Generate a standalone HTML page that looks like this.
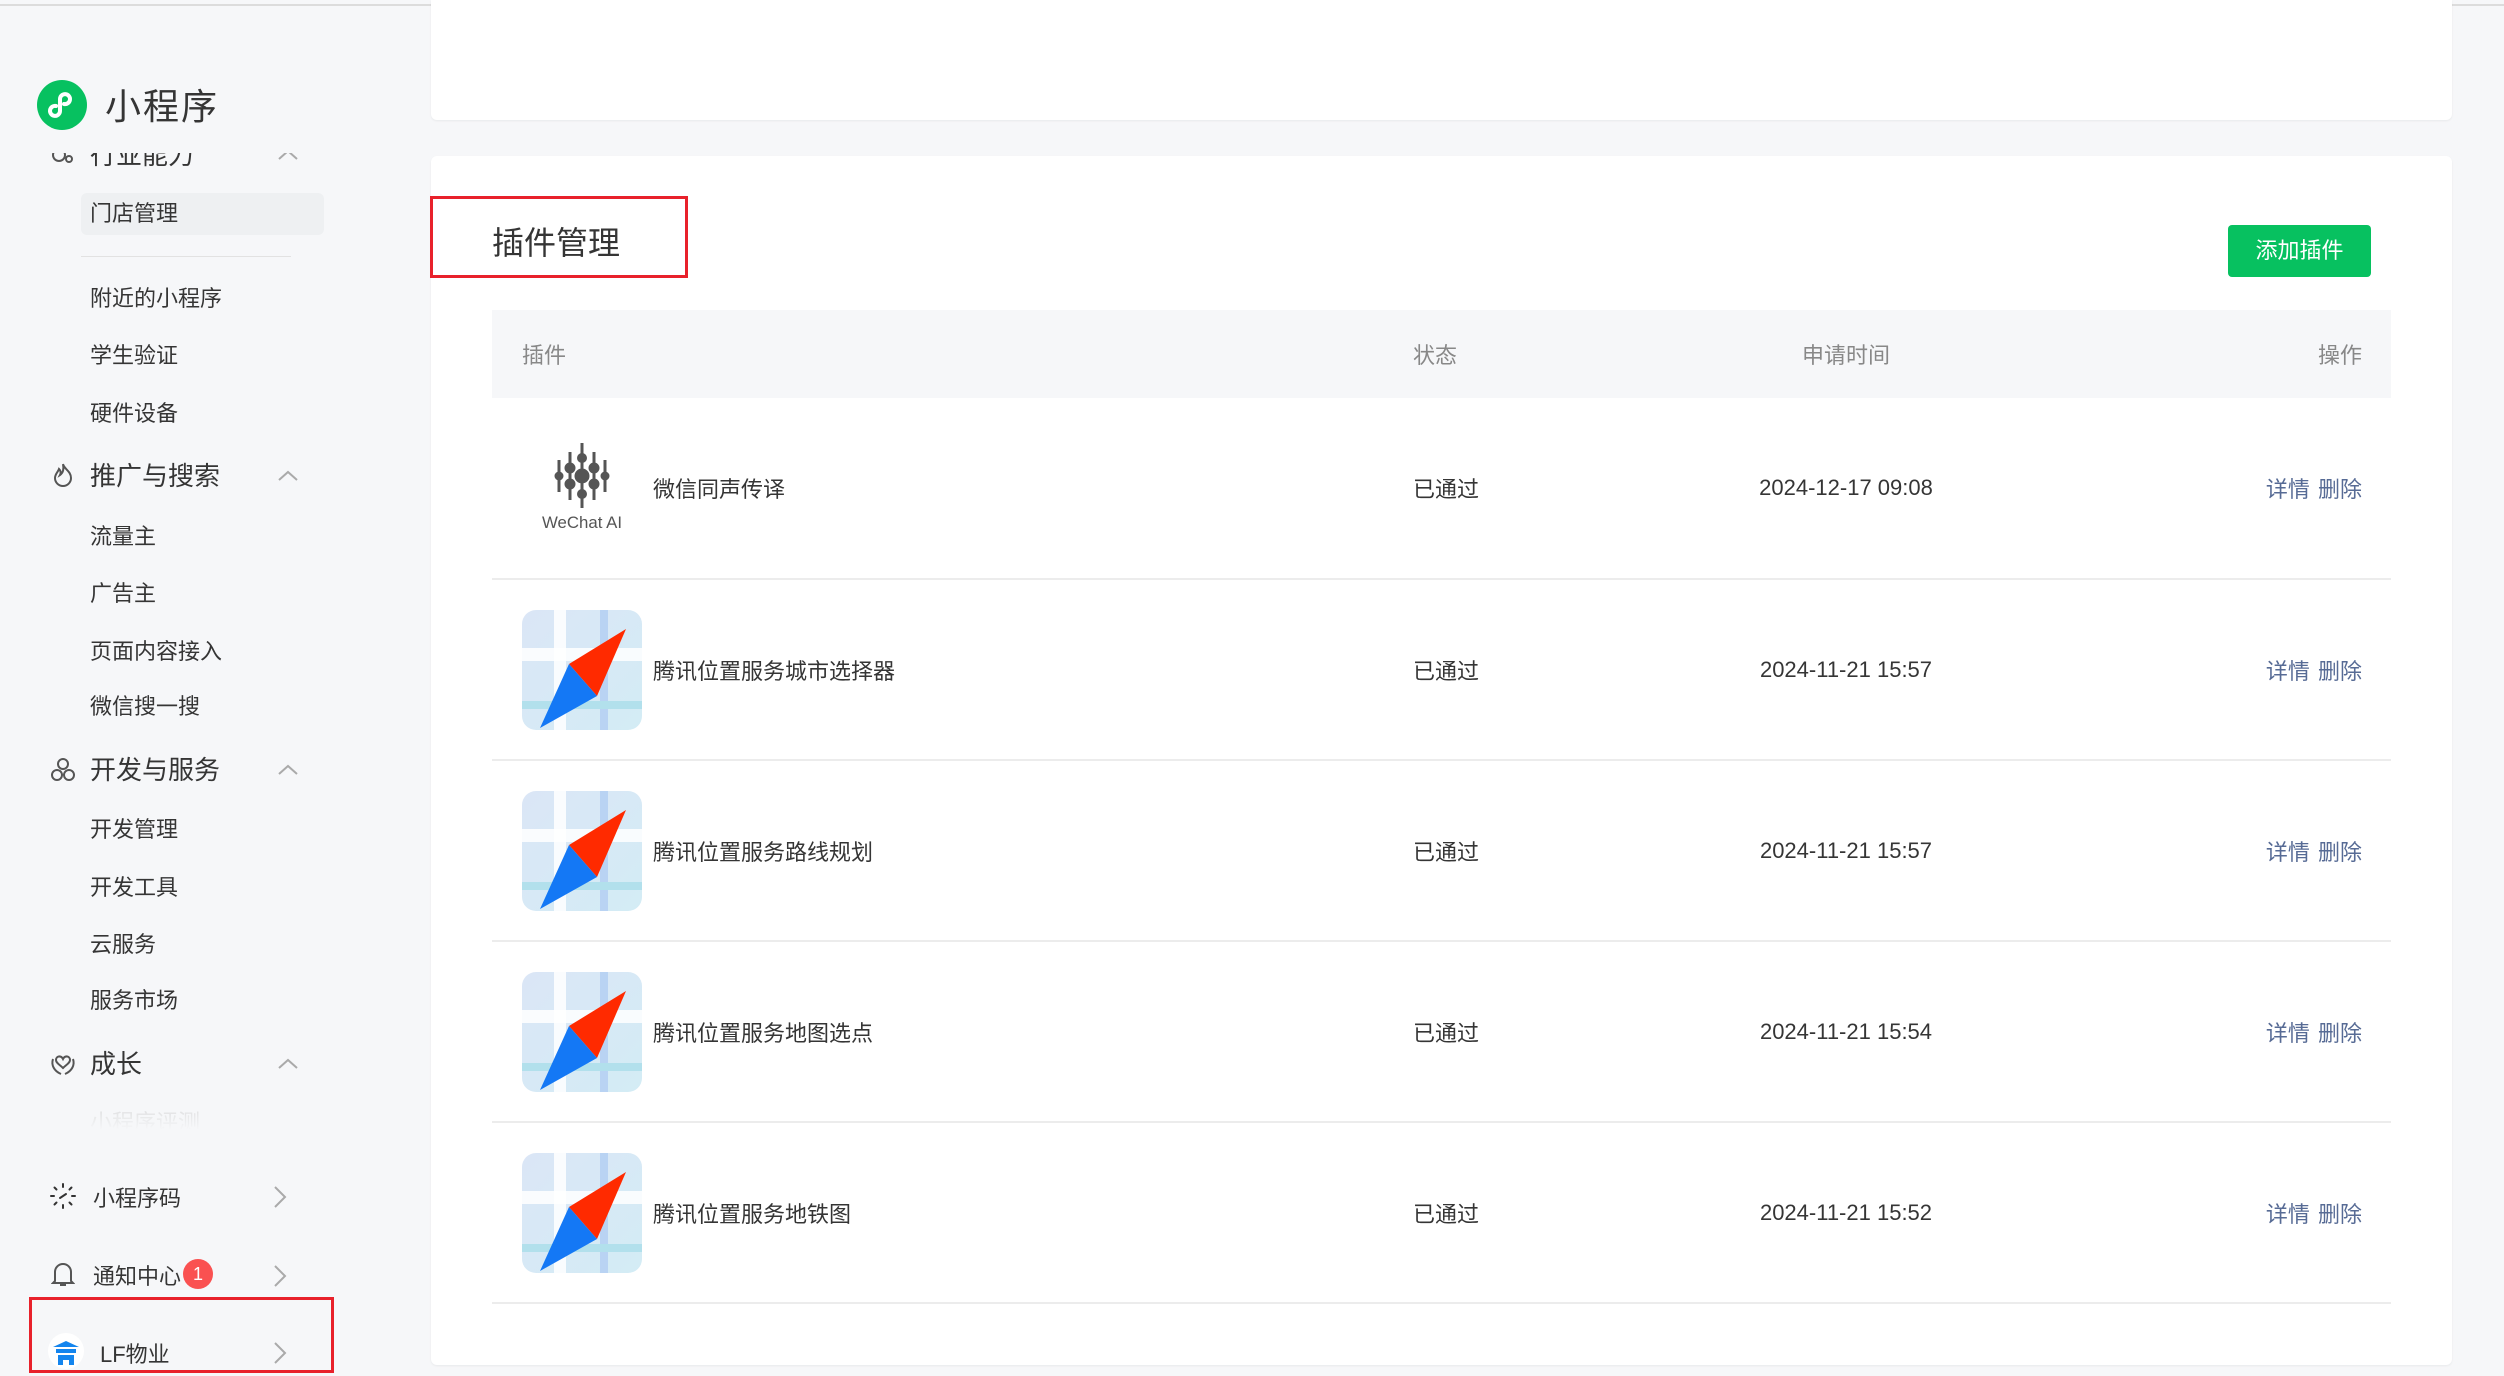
<!DOCTYPE html>
<html><head><meta charset="utf-8"><style>
*{margin:0;padding:0;box-sizing:border-box}
body{width:2504px;height:1376px;overflow:hidden;background:#f6f7f9;font-family:"Liberation Sans","Noto Sans CJK SC",sans-serif;position:relative;color:#353535}
.topline{position:absolute;left:0;top:4px;width:2504px;height:2px;background:#dcdcdc}
.abs{position:absolute}
.side{position:absolute;left:0;top:153px;width:430px;height:977px;overflow:hidden}
.side>div,.side>svg{margin-top:-13px}
.si{position:absolute;left:90px;font-size:22px;color:#353535;line-height:30px;transform:translateY(-50%)}
.gh{position:absolute;left:90px;font-size:26px;color:#353535;line-height:32px;transform:translateY(-50%)}
.chev{position:absolute;left:278px;width:20px;height:20px}
.card{position:absolute;background:#fff;border-radius:6px;box-shadow:0 1px 2px rgba(0,0,0,.06)}
.th{position:absolute;font-size:22px;color:#888;top:354px;transform:translateY(-50%)}
.row{position:absolute;left:492px;width:1899px;height:181px;border-bottom:2px solid #ececec}
.nm{position:absolute;left:161px;top:50%;transform:translateY(-50%);font-size:22px;color:#353535}
.st{position:absolute;left:921px;top:50%;transform:translateY(-50%);font-size:22px;color:#353535}
.dt{position:absolute;left:1254px;width:200px;text-align:center;top:50%;transform:translateY(-50%);font-size:22px;color:#353535}
.op{position:absolute;right:29px;top:50%;transform:translateY(-50%);font-size:22px;color:#576b95;word-spacing:2px}
.ic{position:absolute;left:30px;top:50%;transform:translateY(-50%);width:120px;height:120px}
</style></head><body>
<div class="topline"></div>

<svg class="abs" style="left:37px;top:80px" width="50" height="50" viewBox="0 0 50 50"><circle cx="25" cy="25" r="25" fill="#07c160"/><path d="M19 26a5 5 0 1 0 4 5V19a5 5 0 1 1 4 5" fill="none" stroke="#fff" stroke-width="4" stroke-linecap="round"/></svg>
<div class="abs" style="left:105px;top:78px;font-size:36px;color:#353535;letter-spacing:2px">小程序</div>

<div class="side">
  <svg class="abs" style="left:50px;top:2px" width="26" height="26" viewBox="0 0 26 26"><circle cx="9" cy="13" r="6" fill="none" stroke="#555" stroke-width="2"/><circle cx="19" cy="17" r="3" fill="none" stroke="#555" stroke-width="2"/></svg>
  <div class="gh" style="top:15px;left:90px">行业能力</div>
  <svg class="chev" style="top:5px" viewBox="0 0 20 20"><path d="M1 14l9-8 9 8" fill="none" stroke="#aaa" stroke-width="2"/></svg>
  <div class="abs" style="left:81px;top:53px;width:243px;height:42px;background:#eef0f2;border-radius:6px"></div>
  <div class="si" style="top:74px">门店管理</div>
  <div class="abs" style="left:81px;top:116px;width:210px;height:1px;background:#e2e2e2"></div>
  <div class="si" style="top:159px">附近的小程序</div>
  <div class="si" style="top:216px">学生验证</div>
  <div class="si" style="top:274px">硬件设备</div>
  <svg class="abs" style="left:52px;top:322px" width="22" height="26" viewBox="0 0 22 26"><path d="M11 2c1 5 8 7 8 14a8 8 0 0 1-16 0c0-4 3-6 4-9 2 2 2 4 1 6 3-2 4-6 3-11z" fill="none" stroke="#555" stroke-width="2"/></svg>
  <div class="gh" style="top:336px">推广与搜索</div>
  <svg class="chev" style="top:326px" viewBox="0 0 20 20"><path d="M1 14l9-8 9 8" fill="none" stroke="#aaa" stroke-width="2"/></svg>
  <div class="si" style="top:397px">流量主</div>
  <div class="si" style="top:454px">广告主</div>
  <div class="si" style="top:512px">页面内容接入</div>
  <div class="si" style="top:567px">微信搜一搜</div>
  <svg class="abs" style="left:50px;top:617px" width="26" height="26" viewBox="0 0 26 26"><circle cx="13" cy="7" r="5" fill="none" stroke="#555" stroke-width="2"/><circle cx="7" cy="18" r="5" fill="none" stroke="#555" stroke-width="2"/><circle cx="19" cy="18" r="5" fill="none" stroke="#555" stroke-width="2"/></svg>
  <div class="gh" style="top:630px">开发与服务</div>
  <svg class="chev" style="top:620px" viewBox="0 0 20 20"><path d="M1 14l9-8 9 8" fill="none" stroke="#aaa" stroke-width="2"/></svg>
  <div class="si" style="top:690px">开发管理</div>
  <div class="si" style="top:748px">开发工具</div>
  <div class="si" style="top:805px">云服务</div>
  <div class="si" style="top:861px">服务市场</div>
  <svg class="abs" style="left:50px;top:911px" width="26" height="26" viewBox="0 0 26 26"><path d="M13 8c-2-4-7-3-7 1 0 3 4 5 7 8 3-3 7-5 7-8 0-4-5-5-7-1zM3 8c-2 6 1 12 8 15M23 8c2 6-1 12-8 15" fill="none" stroke="#555" stroke-width="2"/></svg>
  <div class="gh" style="top:924px">成长</div>
  <svg class="chev" style="top:914px" viewBox="0 0 20 20"><path d="M1 14l9-8 9 8" fill="none" stroke="#aaa" stroke-width="2"/></svg>
  <div class="si" style="top:983px;color:#ccc">小程序评测</div>
  <div class="abs" style="left:0;top:950px;width:430px;height:40px;background:linear-gradient(rgba(246,247,249,0),#f6f7f9)"></div>
</div>

<svg class="abs" style="left:50px;top:1183px" width="26" height="26" viewBox="0 0 26 26" stroke="#333" stroke-width="2" stroke-linecap="round"><path d="M13 1v3M13 22v3M1 13h3M22 13h3M4.5 4.5l2 2M19.5 19.5l2 2M21.5 4.5l-2 2M6.5 19.5l-2 2M10 15l6-4"/></svg>
<div class="abs" style="left:93px;top:1181px;font-size:22px">小程序码</div>
<svg class="abs" style="left:272px;top:1185px" width="16" height="24" viewBox="0 0 16 24"><path d="M3 2l10 10-10 10" fill="none" stroke="#aaa" stroke-width="2"/></svg>
<svg class="abs" style="left:51px;top:1260px" width="24" height="28" viewBox="0 0 24 28"><path d="M4 21V12a8 8 0 0 1 16 0v9l2 2H2zM9 25h6" fill="none" stroke="#555" stroke-width="2"/></svg>
<div class="abs" style="left:93px;top:1259px;font-size:22px">通知中心</div>
<div class="abs" style="left:183px;top:1259px;width:30px;height:30px;border-radius:15px;background:#fa5151;color:#fff;font-size:18px;text-align:center;line-height:30px">1</div>
<svg class="abs" style="left:272px;top:1264px" width="16" height="24" viewBox="0 0 16 24"><path d="M3 2l10 10-10 10" fill="none" stroke="#aaa" stroke-width="2"/></svg>
<div class="abs" style="left:29px;top:1297px;width:305px;height:76px;border:3px solid #e8212b"></div>
<svg class="abs" style="left:48px;top:1333px" width="36" height="36" viewBox="0 0 36 36"><circle cx="18" cy="18" r="18" fill="#fff"/><path d="M5 14l13-6 13 6zM8 16h20v4H8zM10 22h16v10h-5v-5h-6v5h-5z" fill="#1485ee"/></svg>
<div class="abs" style="left:100px;top:1337px;font-size:22px">LF物业</div>
<svg class="abs" style="left:272px;top:1341px" width="16" height="24" viewBox="0 0 16 24"><path d="M3 2l10 10-10 10" fill="none" stroke="#aaa" stroke-width="2"/></svg>

<div class="card" style="left:431px;top:0;width:2021px;height:120px;border-radius:0 0 6px 6px"></div>
<div class="card" style="left:431px;top:156px;width:2021px;height:1209px"></div>

<div class="abs" style="left:430px;top:196px;width:258px;height:82px;border:3px solid #e8212b"></div>
<div class="abs" style="left:492px;top:218px;font-size:32px;color:#353535">插件管理</div>
<div class="abs" style="left:2228px;top:225px;width:143px;height:52px;background:#07c160;border-radius:4px;color:#fff;font-size:22px;text-align:center;line-height:52px">添加插件</div>

<div class="abs" style="left:492px;top:310px;width:1899px;height:88px;background:#f6f7f9"></div>
<div class="th" style="left:522px">插件</div>
<div class="th" style="left:1413px">状态</div>
<div class="th" style="left:1746px;width:200px;text-align:center">申请时间</div>
<div class="th" style="left:2318px">操作</div>

<svg width="0" height="0" style="position:absolute"><defs>
<linearGradient id="bg" x1="0" y1="0" x2="1" y2="1"><stop offset="0" stop-color="#dbe6f6"/><stop offset="1" stop-color="#d3ecf5"/></linearGradient>
<symbol id="cmp" viewBox="0 0 120 120"><rect width="120" height="120" rx="14" fill="url(#bg)"/><rect x="32" y="0" width="12" height="120" fill="#fff" opacity=".85"/><rect x="0" y="38" width="120" height="13" fill="#fff" opacity=".85"/><rect x="78" y="0" width="8" height="120" fill="#b9d3f3"/><rect x="0" y="91" width="120" height="8" fill="#b2e0ec"/><path d="M104 19L47 54 75 86z" fill="#ff2a00"/><path d="M47 54L75 86 18 118z" fill="#1478f5"/></symbol>
</defs></svg>

<div class="row" style="top:398px;height:182px">
  <svg class="ic" viewBox="0 0 120 120" style="width:120px"><g stroke="#555" stroke-width="3" fill="#555"><line x1="37" y1="32" x2="37" y2="64"/><line x1="48" y1="24" x2="48" y2="72"/><line x1="60" y1="15" x2="60" y2="80"/><line x1="72" y1="24" x2="72" y2="72"/><line x1="83" y1="32" x2="83" y2="64"/><circle cx="37" cy="48" r="3"/><circle cx="48" cy="40" r="4"/><circle cx="48" cy="56" r="4"/><circle cx="60" cy="48" r="6"/><circle cx="60" cy="30" r="3.5"/><circle cx="60" cy="66" r="3.5"/><circle cx="72" cy="40" r="4"/><circle cx="72" cy="56" r="4"/><circle cx="83" cy="48" r="3"/></g><text x="60" y="100" text-anchor="middle" font-size="17" fill="#555" font-family="Liberation Sans, sans-serif" textLength="80" lengthAdjust="spacingAndGlyphs">WeChat AI</text></svg>
  <div class="nm">微信同声传译</div><div class="st">已通过</div><div class="dt">2024-12-17 09:08</div><div class="op">详情 删除</div>
</div>
<div class="row" style="top:580px;height:181px">
  <svg class="ic"><use href="#cmp"/></svg>
  <div class="nm">腾讯位置服务城市选择器</div><div class="st">已通过</div><div class="dt">2024-11-21 15:57</div><div class="op">详情 删除</div>
</div>
<div class="row" style="top:761px;height:181px">
  <svg class="ic"><use href="#cmp"/></svg>
  <div class="nm">腾讯位置服务路线规划</div><div class="st">已通过</div><div class="dt">2024-11-21 15:57</div><div class="op">详情 删除</div>
</div>
<div class="row" style="top:942px;height:181px">
  <svg class="ic"><use href="#cmp"/></svg>
  <div class="nm">腾讯位置服务地图选点</div><div class="st">已通过</div><div class="dt">2024-11-21 15:54</div><div class="op">详情 删除</div>
</div>
<div class="row" style="top:1123px;height:181px">
  <svg class="ic"><use href="#cmp"/></svg>
  <div class="nm">腾讯位置服务地铁图</div><div class="st">已通过</div><div class="dt">2024-11-21 15:52</div><div class="op">详情 删除</div>
</div>
</body></html>
